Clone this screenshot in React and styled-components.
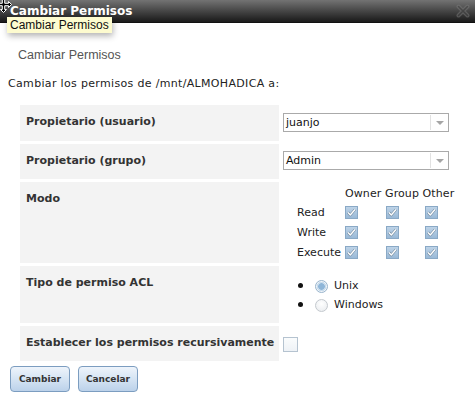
import React from 'react';
import styled, { createGlobalStyle } from 'styled-components';

const GlobalStyle = createGlobalStyle`
  html, body { margin: 0; padding: 0; background: #fff; }
  body { font-family: "DejaVu Sans", Verdana, sans-serif; font-size: 11px; color: #222; }
`;

const Page = styled.div`
  position: relative;
  width: 475px;
  height: 403px;
  overflow: hidden;
  background: #fff;
`;

const TitleBar = styled.div`
  height: 23px;
  display: flex;
  align-items: center;
  justify-content: space-between;
  padding: 0 5px 1px 10px;
  box-sizing: border-box;
  background: linear-gradient(#737373 0%, #4a4a4a 45%, #262626 85%, #1b1b1b 100%);
  border-bottom: 1px solid #111;
`;

const Title = styled.span`
  font-family: "DejaVu Sans", sans-serif;
  font-weight: bold;
  font-size: 12px;
  color: #fff;
`;

const Cursor = styled.svg`
  position: absolute;
  left: -5px;
  top: -4px;
`;

const Tooltip = styled.div`
  position: absolute;
  left: 7px;
  top: 17px;
  height: 16px;
  padding: 0 3px;
  display: flex;
  align-items: center;
  background: #fdfbcf;
  box-shadow: 1px 3px 6px rgba(0, 0, 0, 0.3);
  font-family: "Liberation Sans", Arial, sans-serif;
  font-size: 12px;
  color: #111;
`;

const Subtitle = styled.div`
  padding: 24px 0 0 18px;
  line-height: 16px;
  font-family: "Liberation Sans", Arial, sans-serif;
  font-size: 12.5px;
  color: #555;
`;

const Intro = styled.div`
  margin: 14px 0 0 8px;
  line-height: 14px;
  letter-spacing: 0.33px;
  color: #222;
`;

const Form = styled.div`
  display: grid;
  grid-template-columns: 259px 1fr;
  column-gap: 4px;
  row-gap: 3px;
  margin: 14px 0 0 20px;
`;

const Label = styled.div`
  height: ${p => p.h}px;
  background: #f3f3f3;
  padding: 10px 0 0 6px;
  box-sizing: border-box;
  font-weight: bold;
  line-height: 14px;
  color: #333;
  white-space: nowrap;
`;

const Value = styled.div`
  padding-top: ${p => p.top || 0}px;
  box-sizing: border-box;
  min-height: 0;
`;

const Select = styled.div`
  width: 166px;
  height: 19px;
  border: 1px solid #aaa;
  box-sizing: border-box;
  display: flex;
  align-items: center;
  background: #fff;
  font-size: 11px;
  color: #111;
`;

const SelectText = styled.span`
  flex: 1;
  padding-left: 2px;
`;

const SelectArrow = styled.span`
  width: 17px;
  height: 15px;
  border-left: 1px solid #e2e2e2;
  display: flex;
  align-items: center;
  justify-content: center;
  &::after {
    content: '';
    border-left: 4px solid transparent;
    border-right: 4px solid transparent;
    border-top: 4px solid #a5a5a5;
  }
`;

const ModeGrid = styled.div`
  display: grid;
  grid-template-columns: 48px 41px 39px 30px;
  grid-template-rows: 16px repeat(3, 20px);
  padding-left: 14px;
  align-items: center;
  color: #222;
`;

const ModeHead = styled.div`
  grid-column: 2 / span 3;
  line-height: 16px;
  white-space: nowrap;
  letter-spacing: 0.1px;
`;

const RadioList = styled.div`
  display: flex;
  flex-direction: column;
  padding: 10px 0 0 15px;
`;

const RadioItem = styled.div`
  display: flex;
  align-items: center;
  height: 19px;
  color: #222;
`;

const Dot = styled.span`
  width: 5px;
  height: 5px;
  border-radius: 50%;
  background: #111;
  margin-right: 12px;
`;

const Radio = styled.span`
  width: 13px;
  height: 13px;
  border-radius: 50%;
  box-sizing: border-box;
  border: 1px solid ${p => (p.checked ? '#98b4cc' : '#c4c9ce')};
  background: ${p =>
    p.checked
      ? 'radial-gradient(circle, #8fb6d8 0 3px, #c9dcec 3.5px 4.5px, #eef3f8 5px)'
      : 'radial-gradient(circle at 50% 35%, #ffffff 0, #e7eaed 100%)'};
  margin-right: 6px;
  margin-top: 2px;
`;

const Blank = styled.span`
  display: block;
  width: 15px;
  height: 15px;
  box-sizing: border-box;
  border: 1px solid #b5c3d0;
  background: linear-gradient(#fafcfd, #eef2f6);
`;

const Buttons = styled.div`
  display: flex;
  gap: 8px;
  margin: 5px 0 0 10px;
`;

const Button = styled.button`
  height: 26px;
  width: ${p => p.w}px;
  padding: 0;
  border: 1px solid #7c9dc0;
  border-radius: 4px;
  background: linear-gradient(#eef4fb 0%, #d5e4f3 50%, #bcd2ea 100%);
  font-family: "DejaVu Sans", sans-serif;
  font-weight: bold;
  font-size: 9px;
  color: #333;
`;

const Check = () => (
  <svg width="13" height="13" viewBox="0 0 13 13">
    <defs>
      <linearGradient id="cbFill" x1="0" y1="0" x2="0" y2="1">
        <stop offset="0" stopColor="#bfd4e8" />
        <stop offset="1" stopColor="#98b8d6" />
      </linearGradient>
    </defs>
    <rect x="0.5" y="0.5" width="12" height="12" fill="url(#cbFill)" stroke="#8aa9c6" />
    <path d="M3 6.5 L5.3 9 L10 3.5" fill="none" stroke="#6f879c" strokeWidth="2.6" strokeLinejoin="round" />
    <path d="M3 6.5 L5.3 9 L10 3.5" fill="none" stroke="#fff" strokeWidth="1.4" strokeLinejoin="round" />
  </svg>
);

const CloseIcon = () => (
  <svg width="14" height="14" viewBox="0 0 14 14" opacity="0.55">
    <path d="M2.5 2.5 L11.5 11.5 M11.5 2.5 L2.5 11.5" stroke="#777" strokeWidth="4" strokeLinecap="round" />
    <path d="M2.5 2.5 L11.5 11.5 M11.5 2.5 L2.5 11.5" stroke="#444" strokeWidth="1.5" strokeLinecap="round" />
  </svg>
);

const MoveCursor = () => (
  <Cursor width="17" height="17" viewBox="0 0 17 17">
    <path
      d="M8.5 0.5 L11.5 3.5 L9.7 3.5 L9.7 7.3 L13.5 7.3 L13.5 5.5 L16.5 8.5 L13.5 11.5 L13.5 9.7 L9.7 9.7 L9.7 13.5 L11.5 13.5 L8.5 16.5 L5.5 13.5 L7.3 13.5 L7.3 9.7 L3.5 9.7 L3.5 11.5 L0.5 8.5 L3.5 5.5 L3.5 7.3 L7.3 7.3 L7.3 3.5 L5.5 3.5 Z"
      fill="#000"
      stroke="#fff"
      strokeWidth="1"
    />
  </Cursor>
);

const perms = ['Read', 'Write', 'Execute'];

export default function App() {
  return (
    <Page>
      <GlobalStyle />
      <TitleBar>
        <Title>Cambiar Permisos</Title>
        <CloseIcon />
      </TitleBar>
      <MoveCursor />
      <Tooltip>Cambiar Permisos</Tooltip>

      <Subtitle>Cambiar Permisos</Subtitle>
      <Intro>Cambiar los permisos de /mnt/ALMOHADICA a:</Intro>

      <Form>
        <Label h={36}>Propietario (usuario)</Label>
        <Value top={8}>
          <Select>
            <SelectText>juanjo</SelectText>
            <SelectArrow />
          </Select>
        </Value>

        <Label h={35}>Propietario (grupo)</Label>
        <Value top={7}>
          <Select>
            <SelectText>Admin</SelectText>
            <SelectArrow />
          </Select>
        </Value>

        <Label h={81}>Modo</Label>
        <Value top={4}>
          <ModeGrid>
            <span />
            <ModeHead>Owner Group Other</ModeHead>
            {perms.map(p => (
              <React.Fragment key={p}>
                <span>{p}</span>
                <Check />
                <Check />
                <Check />
              </React.Fragment>
            ))}
          </ModeGrid>
        </Value>

        <Label h={57}>Tipo de permiso ACL</Label>
        <Value>
          <RadioList>
            <RadioItem>
              <Dot />
              <Radio checked />
              Unix
            </RadioItem>
            <RadioItem>
              <Dot />
              <Radio />
              Windows
            </RadioItem>
          </RadioList>
        </Value>

        <Label h={35}>Establecer los permisos recursivamente</Label>
        <Value top={11}>
          <Blank />
        </Value>
      </Form>

      <Buttons>
        <Button w={60}>Cambiar</Button>
        <Button w={60}>Cancelar</Button>
      </Buttons>
    </Page>
  );
}
